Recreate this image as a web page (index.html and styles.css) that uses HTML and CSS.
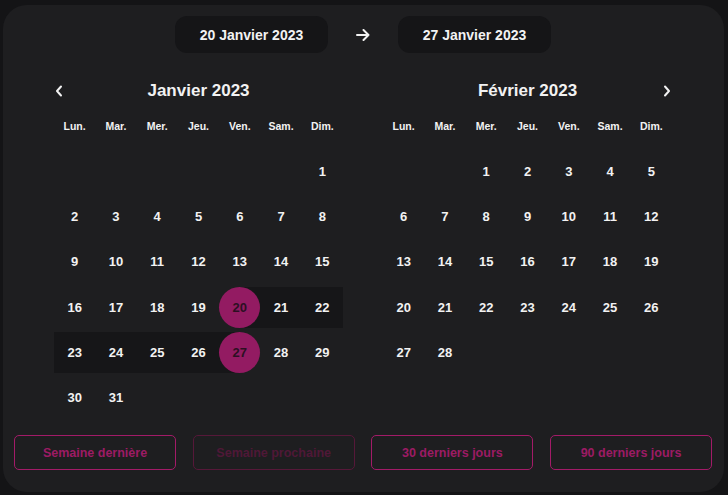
FILE: index.html
```html
<!DOCTYPE html>
<html lang="fr">
<head>
<meta charset="utf-8">
<title>Sélecteur de dates</title>
<link rel="stylesheet" href="styles.css">
</head>
<body>
<div class="panel">
  <div class="range-bar">
    <div class="pill">20 Janvier 2023</div>
    <svg class="arrow" width="14" height="12" viewBox="0 0 14 12"><path d="M1 6 H12.5 M7.5 1 L12.5 6 L7.5 11" fill="none" stroke="#f2f2f2" stroke-width="2" stroke-linecap="round" stroke-linejoin="round"/></svg>
    <div class="pill">27 Janvier 2023</div>
  </div>

  <div class="months">
    <div class="month">
      <div class="month-head">
        <svg class="chev chev-left" width="8" height="12" viewBox="0 0 8 12"><path d="M6 1.5 L2 6 L6 10.5" fill="none" stroke="#f2f2f2" stroke-width="2" stroke-linecap="round" stroke-linejoin="round"/></svg>
        <div class="month-title">Janvier 2023</div>
      </div>
      <div class="weekdays">
        <span>Lun.</span><span>Mar.</span><span>Mer.</span><span>Jeu.</span><span>Ven.</span><span>Sam.</span><span>Dim.</span>
      </div>
      <div class="days">
        <span class="day empty"></span><span class="day empty"></span><span class="day empty"></span><span class="day empty"></span><span class="day empty"></span><span class="day empty"></span><span class="day">1</span>
        <span class="day">2</span><span class="day">3</span><span class="day">4</span><span class="day">5</span><span class="day">6</span><span class="day">7</span><span class="day">8</span>
        <span class="day">9</span><span class="day">10</span><span class="day">11</span><span class="day">12</span><span class="day">13</span><span class="day">14</span><span class="day">15</span>
        <span class="day">16</span><span class="day">17</span><span class="day">18</span><span class="day">19</span><span class="day start"><span class="sel">20</span></span><span class="day in-range">21</span><span class="day in-range">22</span>
        <span class="day in-range">23</span><span class="day in-range">24</span><span class="day in-range">25</span><span class="day in-range">26</span><span class="day end"><span class="sel">27</span></span><span class="day">28</span><span class="day">29</span>
        <span class="day">30</span><span class="day">31</span>
      </div>
    </div>

    <div class="month">
      <div class="month-head">
        <div class="month-title">Février 2023</div>
        <svg class="chev chev-right" width="8" height="12" viewBox="0 0 8 12"><path d="M2 1.5 L6 6 L2 10.5" fill="none" stroke="#f2f2f2" stroke-width="2" stroke-linecap="round" stroke-linejoin="round"/></svg>
      </div>
      <div class="weekdays">
        <span>Lun.</span><span>Mar.</span><span>Mer.</span><span>Jeu.</span><span>Ven.</span><span>Sam.</span><span>Dim.</span>
      </div>
      <div class="days">
        <span class="day empty"></span><span class="day empty"></span><span class="day">1</span><span class="day">2</span><span class="day">3</span><span class="day">4</span><span class="day">5</span>
        <span class="day">6</span><span class="day">7</span><span class="day">8</span><span class="day">9</span><span class="day">10</span><span class="day">11</span><span class="day">12</span>
        <span class="day">13</span><span class="day">14</span><span class="day">15</span><span class="day">16</span><span class="day">17</span><span class="day">18</span><span class="day">19</span>
        <span class="day">20</span><span class="day">21</span><span class="day">22</span><span class="day">23</span><span class="day">24</span><span class="day">25</span><span class="day">26</span>
        <span class="day">27</span><span class="day">28</span>
      </div>
    </div>
  </div>

  <div class="presets">
    <button class="preset">Semaine dernière</button>
    <button class="preset disabled" disabled>Semaine prochaine</button>
    <button class="preset">30 derniers jours</button>
    <button class="preset">90 derniers jours</button>
  </div>
</div>
</body>
</html>
```

FILE: styles.css
```css
* { box-sizing: border-box; }

html, body {
  margin: 0;
  padding: 0;
  background: #141416;
  font-family: "Liberation Sans", Arial, sans-serif;
  color: #f2f2f2;
}

.panel {
  margin: 5px 4px 3px 3px;
  width: 721px;
  height: 487px;
  background: #1e1e20;
  border-radius: 24px;
  padding: 11px 12px 22px 11px;
  display: flex;
  flex-direction: column;
}

.range-bar {
  display: flex;
  align-items: center;
  justify-content: center;
  gap: 28px;
  height: 37px;
}

.pill {
  width: 153px;
  height: 37px;
  border-radius: 12px;
  background: #151517;
  display: flex;
  align-items: center;
  justify-content: center;
  font-size: 14px;
  font-weight: bold;
}

.arrow { display: block; }

.months {
  display: flex;
  gap: 40px;
  padding-left: 40px;
  margin-top: 27px;
}

.month {
  width: 289px;
}

.month-head {
  position: relative;
  height: 22px;
  display: flex;
  align-items: center;
  justify-content: center;
}

.month-title {
  font-size: 17px;
  font-weight: bold;
}

.chev {
  position: absolute;
  top: 5px;
}
.chev-left { left: 1px; }
.chev-right { right: 1px; }

.weekdays {
  margin-top: 16px;
  display: grid;
  grid-template-columns: repeat(7, 1fr);
  height: 16px;
  align-items: center;
  text-align: center;
  font-size: 10.5px;
  font-weight: bold;
}

.days {
  margin-top: 16.5px;
  display: grid;
  grid-template-columns: repeat(7, 1fr);
  grid-auto-rows: 41px;
  row-gap: 4.4px;
  height: 268px;
  align-content: start;
  font-size: 13px;
  font-weight: bold;
}

.day {
  display: flex;
  align-items: center;
  justify-content: center;
}

.day.in-range { background: #161618; }
.day.start { background: linear-gradient(to right, transparent 50%, #161618 50%); }
.day.end { background: linear-gradient(to right, #161618 50%, transparent 50%); }

.sel {
  width: 41px;
  height: 41px;
  border-radius: 50%;
  background: #931b62;
  color: #2c1022;
  display: flex;
  align-items: center;
  justify-content: center;
}

.presets {
  margin-top: 16.5px;
  display: flex;
  gap: 16.7px;
}

.preset {
  width: 162px;
  height: 35px;
  border: 1px solid #a31b68;
  border-radius: 5px;
  background: transparent;
  color: #9c1b64;
  font-family: "Liberation Sans", Arial, sans-serif;
  font-size: 12.5px;
  font-weight: bold;
  padding: 0;
}

.preset.disabled {
  border-color: #561839;
  color: #4f1837;
}
```
